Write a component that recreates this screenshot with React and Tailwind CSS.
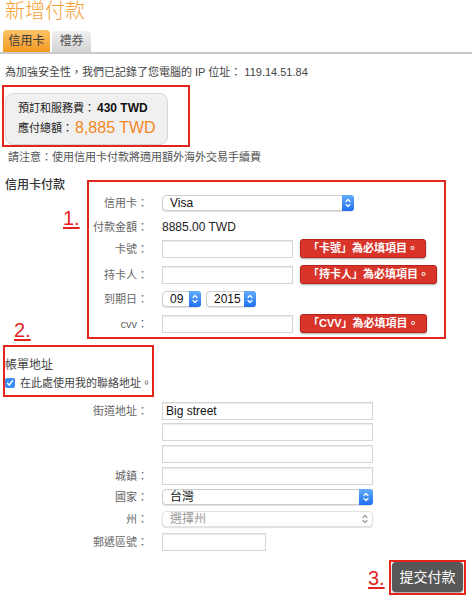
import React from "react";

function Chevrons({ color = "#fff" }) {
  return (
    <svg width="6" height="10" viewBox="0 0 6 10" fill="none" stroke={color} strokeWidth="1.2" strokeLinecap="round" strokeLinejoin="round">
      <path d="M1 3.5 L3 1.5 L5 3.5" />
      <path d="M1 6.5 L3 8.5 L5 6.5" />
    </svg>
  );
}

function Select({ w, h = 16, text, disabled = false, stepW = 12 }) {
  return (
    <div
      className={`flex items-stretch bg-white border rounded-[4px] shadow-[0_1px_1px_rgba(0,0,0,0.12)] ${disabled ? "border-[#e2e2e2]" : "border-[#cdcdcd]"}`}
      style={{ width: w, height: h }}
    >
      <div className={`flex-1 pl-[7px] text-[12px] leading-[14px] flex items-center ${disabled ? "text-[#9a9a9a]" : "text-[#111]"}`}>{text}</div>
      {disabled ? (
        <div className="w-[14px] flex items-center justify-center">
          <Chevrons color="#9a9a9a" />
        </div>
      ) : (
        <div className="flex items-center justify-center rounded-r-[3px] bg-linear-to-b from-[#62acfb] to-[#1f6ff0] -my-px -mr-px" style={{ width: stepW }}>
          <Chevrons />
        </div>
      )}
    </div>
  );
}

function Input({ w, text }) {
  return (
    <div
      className="h-[18px] bg-white border border-[#d6d6d6] shadow-[inset_0_1px_1px_rgba(0,0,0,0.08)] pl-[3px] text-[12px] leading-[16px] text-[#111]"
      style={{ width: w }}
    >
      {text}
    </div>
  );
}

function Badge({ children }) {
  return (
    <div className="h-[19px] px-[7px] rounded-[3px] bg-[#d8342a] border border-[#b8231a] shadow-[0_1px_2px_rgba(0,0,0,0.35)] text-white text-[11px] leading-[17px] font-bold whitespace-nowrap">
      {children}
    </div>
  );
}

function Row({ label, children, className = "", h = 18 }) {
  return (
    <div className={`flex items-center ${className}`} style={{ height: h }}>
      <div className="w-[148px] text-right text-[11px] leading-[14px] text-[#666] whitespace-nowrap">{label}</div>
      <div className="ml-[14px] flex items-center gap-[7px]">{children}</div>
    </div>
  );
}

export default function App() {
  return (
    <div className="relative w-[472px] h-[600px] overflow-hidden bg-white font-['Liberation_Sans','Noto_Sans_CJK_TC',sans-serif] text-[#333]">
      {/* Title */}
      <div className="pl-[5px] h-[22px] text-[20px] leading-[22px] font-light text-[#f5a033]">新增付款</div>

      {/* Tabs */}
      <div className="mt-[8px] h-[24px] flex items-end gap-[2px] pl-[3px] border-b-2 border-[#c9c9c9]">
        <div className="w-[47px] h-[22px] rounded-t-[4px] bg-linear-to-b from-[#fcc266] to-[#f39a1c] text-center text-[12px] leading-[22px] text-[#3a3a3a]">信用卡</div>
        <div className="w-[39px] h-[21px] rounded-t-[4px] bg-linear-to-b from-[#f0f0f0] to-[#d3d3d3] text-center text-[12px] leading-[21px] text-[#555]">禮券</div>
      </div>

      {/* IP line */}
      <div className="mt-[10px] pl-[5px] h-[16px] text-[11px] leading-[16px] text-[#444]">
        為加強安全性，我們已記錄了您電腦的 IP 位址： 119.14.51.84
      </div>

      {/* Summary box */}
      <div className="mt-[13px] ml-[5px] w-[163px] h-[52px] rounded-[8px] bg-[#f0f0f0] border border-[#d9d9d9] pl-[12px] pt-[6px]">
        <div className="h-[16px] flex items-center text-[11px] leading-[16px] text-[#222]">
          預訂和服務費：<span className="ml-[2px] text-[12px] font-bold text-[#111]">430 TWD</span>
        </div>
        <div className="h-[24px] flex items-center text-[11px] leading-[24px] text-[#222]">
          應付總額：<span className="ml-[2px] text-[16px] text-[#f5871f]">8,885 TWD</span>
        </div>
      </div>

      {/* Note */}
      <div className="mt-[4px] pl-[8px] h-[16px] text-[11px] leading-[16px] text-[#555]">
        請注意：使用信用卡付款將適用額外海外交易手續費
      </div>

      {/* Card payment heading */}
      <div className="mt-[12px] pl-[5px] h-[16px] text-[12px] leading-[16px] font-medium text-[#333]">信用卡付款</div>

      {/* Card rows */}
      <Row label="信用卡：" h={16} className="mt-[2px]">
        <Select w={192} text="Visa" />
      </Row>
      <Row label="付款金額：" h={16} className="mt-[8px]">
        <span className="text-[12px] leading-[16px] text-[#222]">8885.00 TWD</span>
      </Row>
      <Row label="卡號：" h={19} className="mt-[4px]">
        <Input w={131} />
        <Badge>「卡號」為必填項目。</Badge>
      </Row>
      <Row label="持卡人：" h={19} className="mt-[7px]">
        <Input w={131} />
        <Badge>「持卡人」為必填項目。</Badge>
      </Row>
      <Row label="到期日：" h={16} className="mt-[7px]">
        <div className="flex gap-[5px]">
          <Select w={39} text="09" />
          <Select w={50} text="2015" />
        </div>
      </Row>
      <Row label="cvv：" h={19} className="mt-[7px]">
        <Input w={131} />
        <Badge>「CVV」為必填項目。</Badge>
      </Row>

      {/* Billing */}
      <div className="mt-[24px] pl-[5px] h-[16px] text-[12px] leading-[16px] text-[#444]">帳單地址</div>
      <div className="mt-[2px] pl-[5px] h-[16px] flex items-center gap-[5px] text-[11px] leading-[16px] text-[#444]">
        <div className="w-[10px] h-[10px] rounded-[2px] bg-[#3b8cf0] flex items-center justify-center">
          <svg width="8" height="8" viewBox="0 0 8 8" fill="none" stroke="#fff" strokeWidth="1.4" strokeLinecap="round" strokeLinejoin="round">
            <path d="M1.5 4.2 L3.2 6 L6.5 1.8" />
          </svg>
        </div>
        <span>在此處使用我的聯絡地址。</span>
      </div>

      <Row label="街道地址：" className="mt-[11px]">
        <Input w={211} text="Big street" />
      </Row>
      <Row label="" className="mt-[3px]">
        <Input w={211} />
      </Row>
      <Row label="" className="mt-[4px]">
        <Input w={211} />
      </Row>
      <Row label="城鎮：" className="mt-[4px]">
        <Input w={211} />
      </Row>
      <Row label="國家：" h={16} className="mt-[4px]">
        <Select w={211} text="台灣" stepW={14} />
      </Row>
      <Row label="州：" h={16} className="mt-[6px]">
        <Select w={211} text="選擇州" disabled />
      </Row>
      <Row label="郵遞區號：" className="mt-[6px]">
        <Input w={104} />
      </Row>

      {/* Submit */}
      <div className="mt-[11px] flex justify-end pr-[9px]">
        <button className="w-[71px] h-[30px] rounded-[4px] bg-[#575757] text-white text-[14px] leading-[30px] shadow-[0_1px_2px_rgba(0,0,0,0.4)]">提交付款</button>
      </div>

      {/* Annotation overlays */}
      <div className="absolute left-[2px] top-[85px] w-[188px] h-[62px] border-2 border-[#e2261d] pointer-events-none" />
      <div className="absolute left-[87px] top-[180px] w-[359px] h-[159px] border-2 border-[#e2261d] pointer-events-none" />
      <div className="absolute left-[3px] top-[345px] w-[151px] h-[52px] border-2 border-[#e2261d] pointer-events-none" />
      <div className="absolute left-[389px] top-[560px] w-[77px] h-[35px] border-2 border-[#e2261d] pointer-events-none" />
      <div className="absolute left-[63px] top-[206px] text-[20px] leading-[24px] text-[#e2261d] underline underline-offset-2">1.</div>
      <div className="absolute left-[14px] top-[318px] text-[20px] leading-[24px] text-[#e2261d] underline underline-offset-2">2.</div>
      <div className="absolute left-[368px] top-[566px] text-[20px] leading-[24px] text-[#e2261d] underline underline-offset-2">3.</div>
    </div>
  );
}
